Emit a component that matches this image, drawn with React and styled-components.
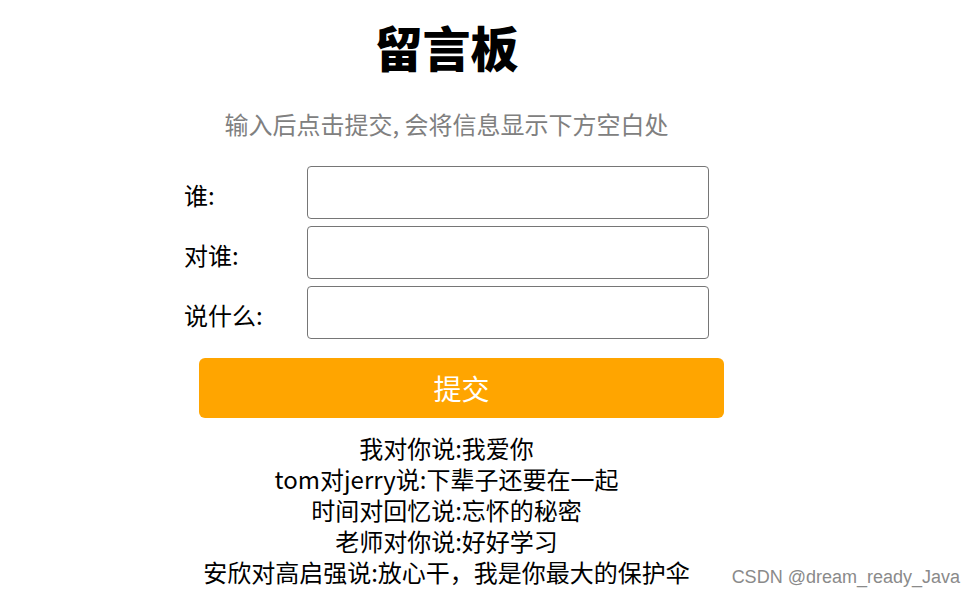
import React from "react";
import styled, { createGlobalStyle } from "styled-components";

const Global = createGlobalStyle`
  html, body { margin: 0; padding: 0; background: #fff; }
  body { font-family: "Noto Sans CJK SC", "Noto Sans", sans-serif; color: #000; }
`;

const Page = styled.div`
  position: relative;
  width: 975px;
  height: 598px;
  overflow: hidden;
`;

const Container = styled.div`
  width: 525px;
  margin-left: 184px;
  padding-top: 18px;
  display: flex;
  flex-direction: column;
`;

const Title = styled.h1`
  margin: 0;
  font-size: 48px;
  line-height: 56px;
  font-weight: 900;
  text-align: center;
`;

const Subtitle = styled.p`
  margin: 35px 0 0;
  font-size: 24px;
  line-height: 30px;
  color: #808080;
  text-align: center;
  white-space: nowrap;
`;

const Form = styled.div`
  margin-top: 27px;
  display: flex;
  flex-direction: column;
  gap: 7px;
`;

const Row = styled.div`
  display: flex;
  align-items: center;
  height: 53px;
`;

const Label = styled.span`
  width: 123px;
  font-size: 24px;
  line-height: 30px;
  padding-top: 4px;
`;

const Input = styled.input`
  box-sizing: border-box;
  width: 402px;
  height: 53px;
  border: 1px solid #767676;
  border-radius: 4px;
  background: #fff;
  font-size: 20px;
  padding: 0 8px;
  outline: none;
`;

const SubmitButton = styled.button`
  box-sizing: border-box;
  margin: 19px 0 0 15px;
  width: 525px;
  height: 60px;
  border: none;
  border-radius: 6px;
  background: #ffa500;
  color: #fff;
  font-family: "Noto Sans CJK SC", sans-serif;
  font-size: 28px;
  line-height: 60px;
  padding: 0;
  cursor: pointer;
`;

const Messages = styled.div`
  margin-top: 14px;
  display: flex;
  flex-direction: column;
  align-items: center;
`;

const Message = styled.div`
  font-size: 24px;
  line-height: 31px;
  white-space: nowrap;
`;

const Watermark = styled.div`
  position: absolute;
  right: 15px;
  top: 566px;
  font-family: "Liberation Sans", Arial, sans-serif;
  font-size: 18px;
  line-height: 22px;
  color: #8a8a8a;
  text-shadow: 0 0 1px #fff;
`;

const messages = [
  "我对你说:我爱你",
  "tom对jerry说:下辈子还要在一起",
  "时间对回忆说:忘怀的秘密",
  "老师对你说:好好学习",
  "安欣对高启强说:放心干，我是你最大的保护伞",
];

const fields = ["谁:", "对谁:", "说什么:"];

export default function App() {
  return (
    <Page>
      <Global />
      <Container>
        <Title>留言板</Title>
        <Subtitle>输入后点击提交, 会将信息显示下方空白处</Subtitle>
        <Form>
          {fields.map((f) => (
            <Row key={f}>
              <Label>{f}</Label>
              <Input type="text" />
            </Row>
          ))}
        </Form>
        <SubmitButton>提交</SubmitButton>
        <Messages>
          {messages.map((m) => (
            <Message key={m}>{m}</Message>
          ))}
        </Messages>
      </Container>
      <Watermark>CSDN @dream_ready_Java</Watermark>
    </Page>
  );
}
